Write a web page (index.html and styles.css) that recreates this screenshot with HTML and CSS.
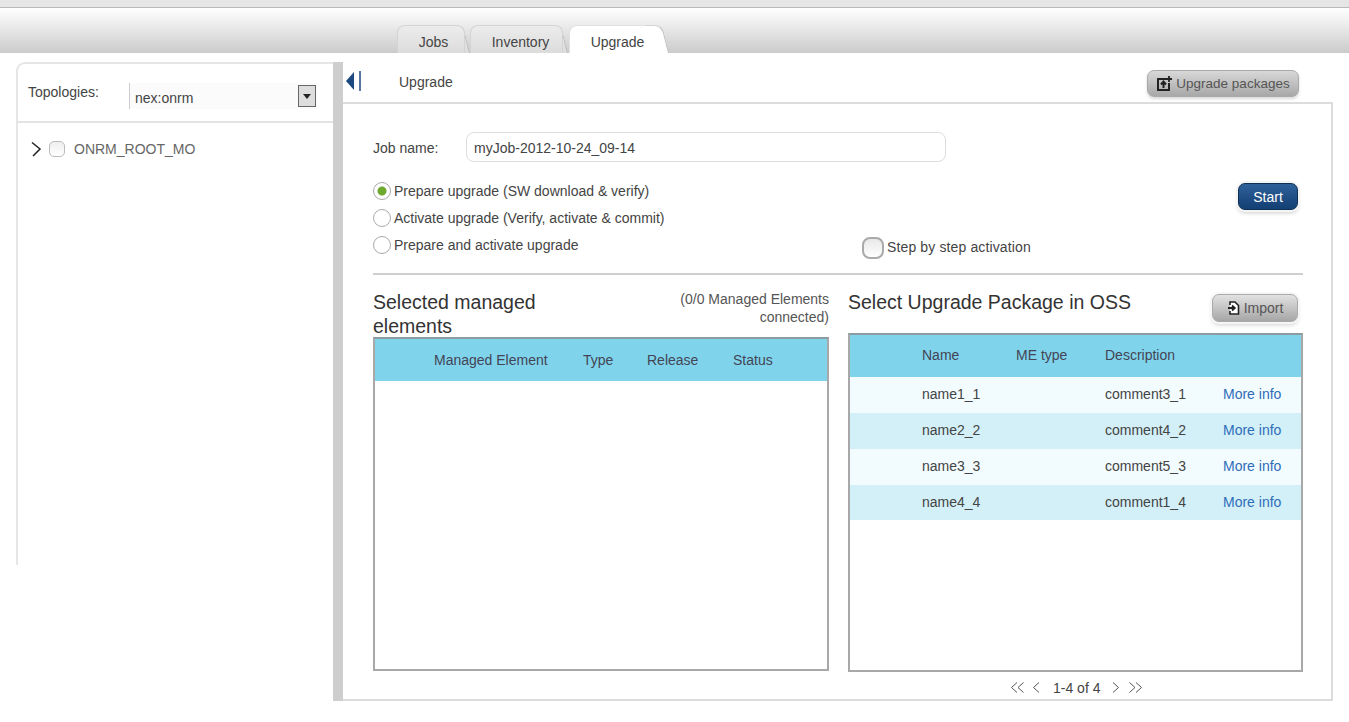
FILE: index.html
```html
<!DOCTYPE html>
<html lang="en">
<head>
<meta charset="utf-8">
<title>Upgrade</title>
<link rel="stylesheet" href="styles.css">
</head>
<body>
<div class="topstrip"></div>
<header class="tabbar">
  <nav class="tabs">
    <a class="tab tab-jobs">Jobs</a>
    <a class="tab tab-inventory">Inventory</a>
    <a class="tab tab-upgrade active">Upgrade</a>
  </nav>
</header>
<main class="main">
  <aside class="sidebar">
    <div class="topology">
      <span class="topology-label">Topologies:</span>
      <div class="select">
        <span class="select-value">nex:onrm</span>
        <span class="select-btn"><svg width="8" height="5" viewBox="0 0 8 5"><path d="M0 0h8L4 5z" fill="#222"/></svg></span>
      </div>
    </div>
    <div class="tree-row">
      <svg class="tree-arrow" width="12" height="16" viewBox="0 0 12 16"><path d="M2 1.500L10 8L3 15" fill="none" stroke="#222" stroke-width="1.500"/></svg>
      <span class="tree-check"></span>
      <span class="tree-label">ONRM_ROOT_MO</span>
    </div>
  </aside>
  <div class="splitter"></div>
  <section class="content">
    <div class="toolbar">
      <span class="collapse"><svg width="16" height="20" viewBox="0 0 16 20"><path d="M9 1v18L1 10z" fill="#1c4a80"/><path d="M15 0v20" stroke="#1c4a80" stroke-width="1.500"/></svg></span>
      <span class="toolbar-title">Upgrade</span>
      <button class="btn btn-packages">
        <svg width="16" height="16" viewBox="0 0 16 16"><path d="M10 3H2v11h11V7" fill="none" stroke="#222" stroke-width="2"/><path d="M7.500 12V7M5 8.500l2.500-3l2.500 3" fill="none" stroke="#222" stroke-width="2"/><path d="M13 0v6M10 3h6" stroke="#222" stroke-width="1.800"/></svg>
        Upgrade packages
      </button>
    </div>
    <div class="panel">
      <div class="job-row">
        <label class="job-label">Job name:</label>
        <input class="job-input" type="text" value="myJob-2012-10-24_09-14">
      </div>
      <div class="options">
        <div class="radios">
          <div class="radio-row"><span class="radio checked"></span>Prepare upgrade (SW download &amp; verify)</div>
          <div class="radio-row"><span class="radio"></span>Activate upgrade (Verify, activate &amp; commit)</div>
          <div class="radio-row"><span class="radio"></span>Prepare and activate upgrade</div>
        </div>
        <div class="step"><span class="step-check"></span>Step by step activation</div>
        <button class="btn-start">Start</button>
      </div>
      <div class="rule"></div>
      <div class="columns">
        <div class="col">
          <div class="col-head col-head-left">
            <h2 class="heading heading-left">Selected managed elements</h2>
            <div class="connected">(0/0 Managed Elements connected)</div>
          </div>
          <div class="grid grid-left">
            <div class="grid-header grid-header-left">
              <span class="c-me">Managed Element</span><span class="c-type">Type</span><span class="c-rel">Release</span><span>Status</span>
            </div>
          </div>
        </div>
        <div class="col">
          <div class="col-head col-head-right">
            <h2 class="heading">Select Upgrade Package in OSS</h2>
            <button class="btn btn-import">
              <svg width="13" height="14" viewBox="0 0 13 14"><path d="M3 4V1h5l3.500 3.500V13H3v-3" fill="#fff" stroke="#222" stroke-width="1.600"/><path d="M1 7h6M5 4.500L7.800 7L5 9.500" fill="none" stroke="#222" stroke-width="1.800"/></svg>
              Import
            </button>
          </div>
          <div class="grid grid-right">
            <div class="grid-header row-cols"><span>Name</span><span>ME type</span><span>Description</span><span></span></div>
            <div class="row row-cols row-light"><span>name1_1</span><span></span><span>comment3_1</span><a class="more">More info</a></div>
            <div class="row row-cols row-dark"><span>name2_2</span><span></span><span>comment4_2</span><a class="more">More info</a></div>
            <div class="row row-cols row-light"><span>name3_3</span><span></span><span>comment5_3</span><a class="more">More info</a></div>
            <div class="row row-cols row-dark"><span>name4_4</span><span></span><span>comment1_4</span><a class="more">More info</a></div>
          </div>
          <div class="pager">
            <svg width="15" height="11" viewBox="0 0 15 11"><path d="M7 .5L1.500 5.500L7 10.500M13.500 .5L8 5.500L13.500 10.500" fill="none" stroke="#555"/></svg>
            <svg class="pg-gap" width="8" height="11" viewBox="0 0 8 11"><path d="M7 .5L1.500 5.500L7 10.500" fill="none" stroke="#555"/></svg>
            <span class="pg-text">1-4 of 4</span>
            <svg class="pg-gap2" width="8" height="11" viewBox="0 0 8 11"><path d="M1 .5L6.500 5.500L1 10.500" fill="none" stroke="#555"/></svg>
            <svg width="15" height="11" viewBox="0 0 15 11"><path d="M1.500 .5L7 5.500L1.500 10.500M8 .5L13.500 5.500L8 10.500" fill="none" stroke="#555"/></svg>
          </div>
        </div>
      </div>
    </div>
  </section>
</main>
</body>
</html>
```
FILE: styles.css
```css
* { box-sizing: border-box; }
html, body { margin: 0; padding: 0; height: 100%; }
body { background: #fff; font-family: "Liberation Sans", Arial, sans-serif; font-size: 14px; color: #444; overflow: hidden; }

.topstrip { height: 8px; background: #e6e6e6; border-bottom: 1px solid #b9b9b9; }

.tabbar { height: 45px; background: linear-gradient(#fefefe 0%, #f0f0f0 30%, #cbcbcb 100%); padding-left: 397px; display: flex; align-items: flex-end; }
.tabs { display: flex; height: 28px; isolation: isolate; }
.tab { position: relative; display: flex; align-items: center; justify-content: center; padding-top: 5px; color: #444; background: linear-gradient(#ececec, #dcdcdc); border: 1px solid #d4d4d4; border-bottom: 0; border-radius: 8px 8px 0 0; }
.tab::after { content: ""; position: absolute; top: -1px; bottom: 0; right: -6px; width: 16px; background: inherit; border-top: 1px solid #d4d4d4; border-right: 1px solid #bbb; border-radius: 0 8px 0 0; transform: skewX(14deg); transform-origin: bottom; z-index: -1; }
.tab-jobs { width: 68px; margin-right: 5px; padding-left: 5px; }
.tab-inventory { width: 93px; margin-right: 6px; padding-left: 8px; }
.tab-upgrade { width: 95px; padding-left: 2px; }
.tab.active { background: #fff; border-color: #e2e2e2; }
.tab.active::after { background: #fff; z-index: 1; }

.main { display: flex; height: 649px; padding: 9px 16px 0 16px; align-items: flex-start; }

.sidebar { width: 317px; height: 503px; flex: none; border-left: 2px solid #e6e6e6; border-top: 2px solid #e6e6e6; border-top-left-radius: 9px; }
.topology { height: 59px; border-bottom: 2px solid #e4e4e4; display: flex; padding: 18px 0 0 10px; }
.topology-label { width: 101px; line-height: 20px; color: #444; }
.select { width: 188px; height: 26px; margin-top: 1px; background: #fbfbfb; border-left: 1px solid #ccc; display: flex; justify-content: space-between; align-items: center; padding: 0 1px 0 5px; }
.select-value { padding-top: 3px; }
.select-btn { width: 18px; height: 22px; border: 1px solid #666; background: #ddd; display: flex; align-items: center; justify-content: center; }
.tree-row { display: flex; align-items: center; margin-top: 16px; padding-left: 12px; height: 20px; }
.tree-arrow { margin-right: 7px; }
.tree-check { width: 16px; height: 16px; border: 1.500px solid #bbb; border-radius: 5px; margin-right: 9px; background: linear-gradient(#eee, #fff); }
.tree-label { color: #666; }

.splitter { width: 10px; height: 639px; flex: none; background: #cfcecf; }

.content { width: 990px; height: 639px; flex: none; display: flex; flex-direction: column; }
.toolbar { height: 40px; flex: none; display: flex; align-items: center; padding: 0 34px 0 2px; }
.collapse { display: flex; width: 54px; margin-top: -3px; }
.toolbar-title { flex: 1; color: #444; margin-top: -1px; }
.btn { display: inline-flex; align-items: center; justify-content: center; gap: 4px; font: 14px "Liberation Sans", Arial, sans-serif; color: #555; background: linear-gradient(#d8d8d8, #a8a8a8); border: 1px solid #aaa; border-radius: 7px; padding: 0; box-shadow: 0 2px 3px rgba(0,0,0,.15); }
.btn-packages { width: 152px; height: 27px; margin-top: 3px; font-size: 13.500px; }

.panel { flex: 1; border: 2px solid #dcdcdc; border-left: 0; padding: 28px 28px 0 30px; min-height: 0; }
.job-row { display: flex; align-items: center; height: 30px; }
.job-label { width: 93px; padding-top: 2px; }
.job-input { width: 480px; height: 30px; border: 1px solid #ddd; border-radius: 8px; padding: 2px 7px 0; font: 14px "Liberation Sans", Arial, sans-serif; color: #444; background: #fff; outline: 0; }

.options { display: flex; height: 91px; margin-top: 20px; }
.radios { width: 489px; }
.radio-row { display: flex; align-items: center; height: 18px; margin-bottom: 9px; }
.radio { width: 18px; height: 18px; flex: none; border: 1.500px solid #aaa; border-radius: 50%; margin-right: 3px; background: #fff; }
.radio.checked { background: radial-gradient(circle, #6fa82f 0 4px, #fff 5px); }
.step { display: flex; align-items: center; height: 24px; margin-top: 53px; width: 376px; letter-spacing: .13px; }
.step-check { width: 22px; height: 22px; margin-right: 3px; margin-top: 2px; border: 2px solid #aaa; border-radius: 8px; background: linear-gradient(#e8e8e8, #fff); flex: none; }
.btn-start { width: 60px; height: 27px; margin-top: 1px; color: #fff; font: 14px "Liberation Sans", Arial, sans-serif; background: linear-gradient(#2f6199, #123f74); border: 1px solid #0f2f55; border-radius: 7px; padding: 0; box-shadow: 0 0 0 2px #f4f4f4, 0 3px 4px rgba(0,0,0,.2); }

.rule { height: 2px; background: #cfcfcf; }

.columns { display: grid; grid-template-columns: 456px 455px; column-gap: 19px; }
.col { min-width: 0; }
.col-head-left { height: 62px; display: flex; justify-content: space-between; padding-top: 15px; }
.col-head-right { height: 58px; display: flex; justify-content: space-between; padding-top: 15px; }
.heading { margin: 0; font-size: 19.500px; font-weight: 400; line-height: 24px; color: #333; }
.heading-left { width: 220px; }
.connected { width: 190px; text-align: right; line-height: 18px; color: #555; }
.btn-import { width: 86px; height: 28px; margin-right: 5px; margin-top: 4px; background: linear-gradient(#e2e2e2, #a6a6a6); box-shadow: 0 0 0 2px #f6f6f6, 0 3px 4px rgba(0,0,0,.18); }

.grid { border: 2px solid #a8a8a8; border-top-color: #8c9ba0; background: #fff; }
.grid-left { height: 334px; }
.grid-right { height: 339px; }
.grid-header { background: #7fd4ec; color: #445; }
.grid-header-left { height: 42px; display: flex; align-items: center; padding-left: 59px; }
.c-me { width: 149px; }
.c-type { width: 64px; }
.c-rel { width: 86px; }
.row-cols { display: grid; grid-template-columns: 72px 94px 89px 118px 78px; align-items: center; padding-bottom: 2px; }
.row-cols::before { content: ""; }
.grid-right .grid-header { height: 42px; }
.row { height: 36px; color: #444; }
.row:last-child { height: 35px; }
.row-light { background: #f2fbfe; }
.row-dark { background: #d3f0f8; }
.more { color: #2f6db8; }

.pager { display: flex; align-items: center; padding-left: 162px; margin-top: 9px; height: 13px; color: #444; }
.pg-gap { margin-left: 7px; }
.pg-text { margin: 0 12px 0 13px; }
.pg-gap2 { margin-right: 8px; }
```
